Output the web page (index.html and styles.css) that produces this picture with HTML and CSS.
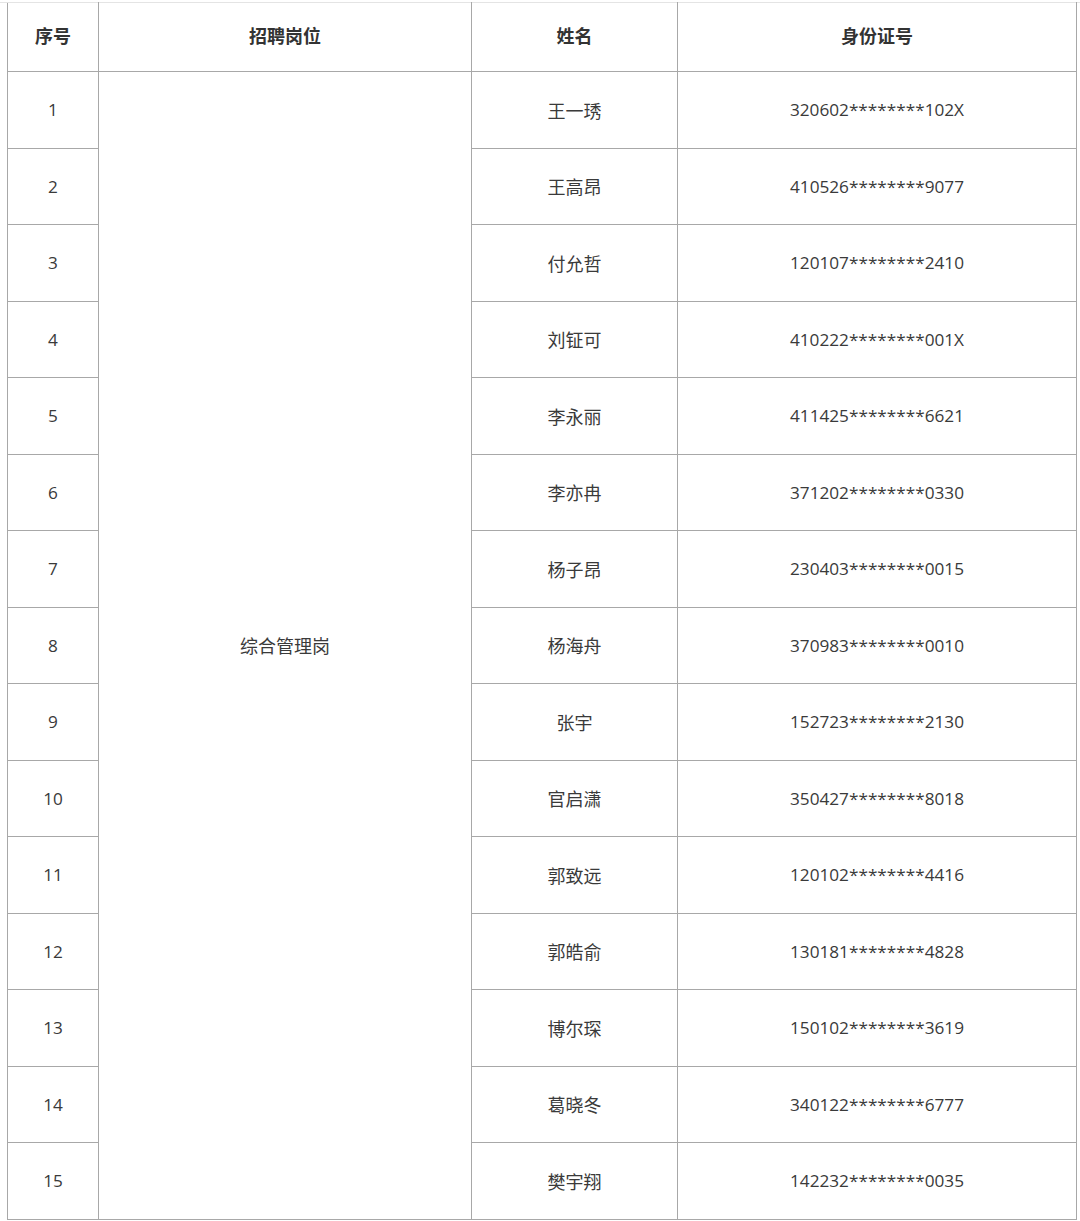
FILE: index.html
```html
<!DOCTYPE html>
<html lang="zh-CN">
<head>
<meta charset="utf-8">
<link rel="stylesheet" href="styles.css">
</head>
<body>
<div class="topline"></div>
<div class="wrap">
<table class="list">
<colgroup>
<col class="c1"><col class="c2"><col class="c3"><col class="c4">
</colgroup>
<thead>
<tr class="head"><th>序号</th><th>招聘岗位</th><th>姓名</th><th>身份证号</th></tr>
</thead>
<tbody>
<tr><td>1</td><td rowspan="15" class="cjk">综合管理岗</td><td class="cjk">王一琇</td><td>320602********102X</td></tr>
<tr><td>2</td><td class="cjk">王高昂</td><td>410526********9077</td></tr>
<tr><td>3</td><td class="cjk">付允哲</td><td>120107********2410</td></tr>
<tr><td>4</td><td class="cjk">刘钲可</td><td>410222********001X</td></tr>
<tr><td>5</td><td class="cjk">李永丽</td><td>411425********6621</td></tr>
<tr><td>6</td><td class="cjk">李亦冉</td><td>371202********0330</td></tr>
<tr><td>7</td><td class="cjk">杨子昂</td><td>230403********0015</td></tr>
<tr><td>8</td><td class="cjk">杨海舟</td><td>370983********0010</td></tr>
<tr><td>9</td><td class="cjk">张宇</td><td>152723********2130</td></tr>
<tr><td>10</td><td class="cjk">官启潇</td><td>350427********8018</td></tr>
<tr><td>11</td><td class="cjk">郭致远</td><td>120102********4416</td></tr>
<tr><td>12</td><td class="cjk">郭皓俞</td><td>130181********4828</td></tr>
<tr><td>13</td><td class="cjk">博尔琛</td><td>150102********3619</td></tr>
<tr><td>14</td><td class="cjk">葛晓冬</td><td>340122********6777</td></tr>
<tr><td>15</td><td class="cjk">樊宇翔</td><td>142232********0035</td></tr>
</tbody>
</table>
</div>
</body>
</html>
```
FILE: styles.css
```css
html, body {
  margin: 0;
  padding: 0;
  background: #ffffff;
}
.topline {
  height: 2px;
  border-bottom: 1px solid #e4e4e4;
  box-sizing: content-box;
}
.wrap {
  padding: 0 4px 0 7px;
}
.list {
  border-collapse: collapse;
  table-layout: fixed;
  width: 1069px;
  font-family: "Open Sans", "Noto Sans CJK SC", sans-serif;
  font-size: 17.2px;
  color: #3a3a3a;
  margin-top: -1px;
}
.c1 { width: 91px; }
.c2 { width: 373px; }
.c3 { width: 206px; }
.c4 { width: 399px; }
.list th, .list td {
  border: 1px solid #a8a8a8;
  text-align: center;
  vertical-align: middle;
  padding: 0;
}
.list thead th {
  border-top-color: #e4e4e4;
  font-family: "Noto Sans CJK SC", sans-serif;
  font-size: 18px;
  font-weight: 700;
  color: #333333;
  height: 64px;
  padding-bottom: 4px;
}
.list tbody td {
  height: 75.5px;
}
.list tbody td.cjk {
  font-family: "Noto Sans CJK SC", sans-serif;
  font-size: 18px;
}
```
